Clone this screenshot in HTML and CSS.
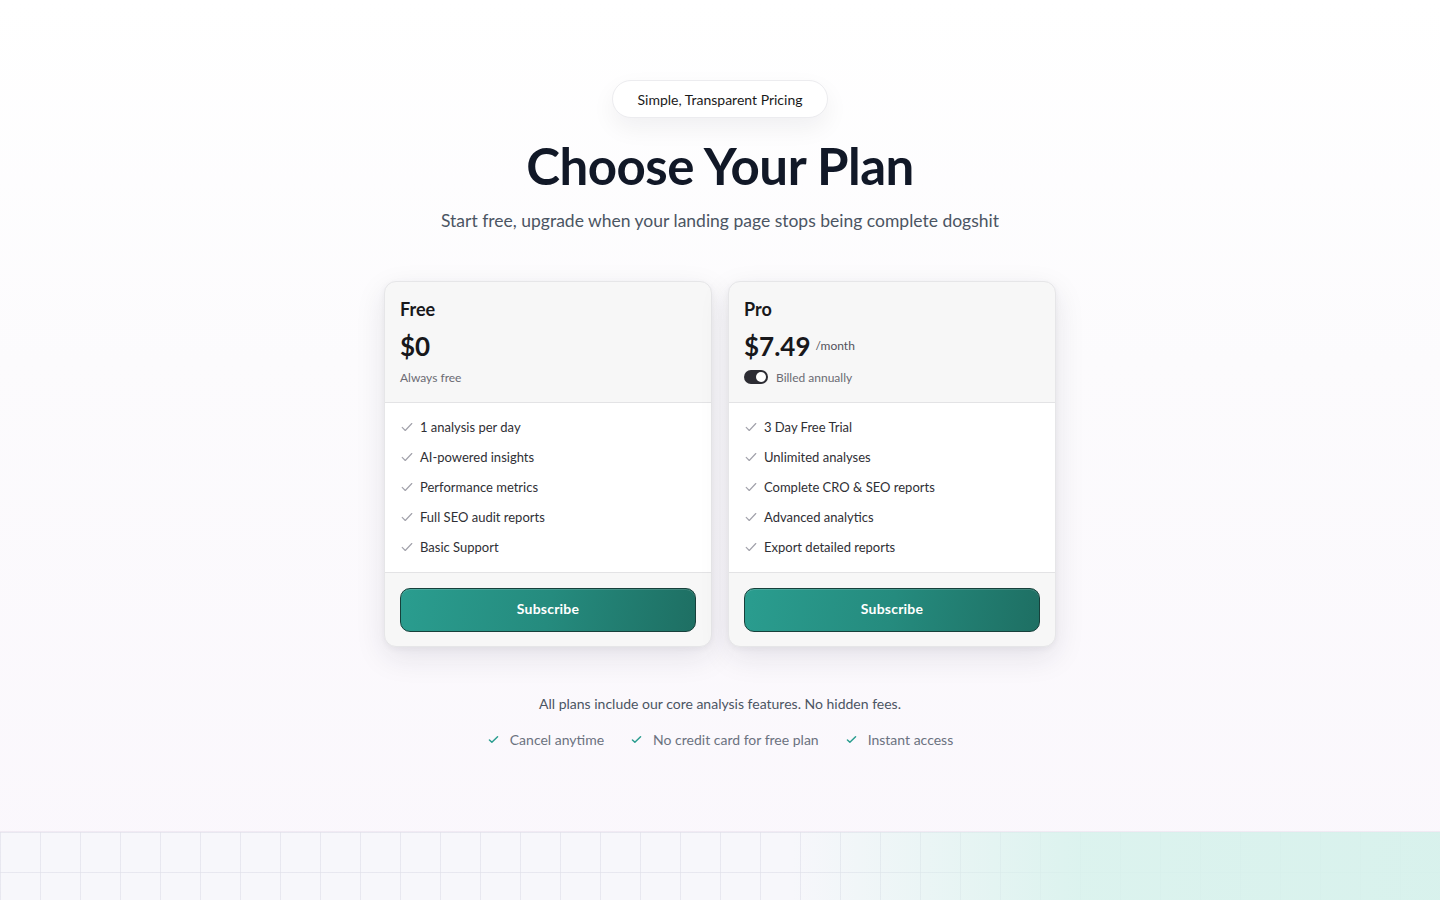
FILE: index.html
```html
<!DOCTYPE html>
<html lang="en">
<head>
<meta charset="utf-8">
<title>Choose Your Plan</title>
<link rel="stylesheet" href="styles.css">
</head>
<body>
<main class="pricing">
  <div class="badge">Simple, Transparent Pricing</div>
  <h1 class="title">Choose Your Plan</h1>
  <p class="subtitle">Start free, upgrade when your landing page stops being complete dogshit</p>

  <div class="cards">
    <section class="card">
      <div class="card-head">
        <h2 class="plan-name">Free</h2>
        <div class="price-row"><span class="price">$0</span></div>
        <div class="note-row"><span class="note">Always free</span></div>
      </div>
      <ul class="features">
        <li><svg class="chk" viewBox="0 0 16 16"><path d="M2.5 8.5l3.5 3.5 7.5-8"/></svg>1 analysis per day</li>
        <li><svg class="chk" viewBox="0 0 16 16"><path d="M2.5 8.5l3.5 3.5 7.5-8"/></svg>AI-powered insights</li>
        <li><svg class="chk" viewBox="0 0 16 16"><path d="M2.5 8.5l3.5 3.5 7.5-8"/></svg>Performance metrics</li>
        <li><svg class="chk" viewBox="0 0 16 16"><path d="M2.5 8.5l3.5 3.5 7.5-8"/></svg>Full SEO audit reports</li>
        <li><svg class="chk" viewBox="0 0 16 16"><path d="M2.5 8.5l3.5 3.5 7.5-8"/></svg>Basic Support</li>
      </ul>
      <div class="card-foot"><button class="btn">Subscribe</button></div>
    </section>

    <section class="card">
      <div class="card-head">
        <h2 class="plan-name">Pro</h2>
        <div class="price-row"><span class="price">$7.49</span><span class="per">/month</span></div>
        <div class="note-row"><span class="toggle"><span class="knob"></span></span><span class="note">Billed annually</span></div>
      </div>
      <ul class="features">
        <li><svg class="chk" viewBox="0 0 16 16"><path d="M2.5 8.5l3.5 3.5 7.5-8"/></svg>3 Day Free Trial</li>
        <li><svg class="chk" viewBox="0 0 16 16"><path d="M2.5 8.5l3.5 3.5 7.5-8"/></svg>Unlimited analyses</li>
        <li><svg class="chk" viewBox="0 0 16 16"><path d="M2.5 8.5l3.5 3.5 7.5-8"/></svg>Complete CRO &amp; SEO reports</li>
        <li><svg class="chk" viewBox="0 0 16 16"><path d="M2.5 8.5l3.5 3.5 7.5-8"/></svg>Advanced analytics</li>
        <li><svg class="chk" viewBox="0 0 16 16"><path d="M2.5 8.5l3.5 3.5 7.5-8"/></svg>Export detailed reports</li>
      </ul>
      <div class="card-foot"><button class="btn">Subscribe</button></div>
    </section>
  </div>

  <p class="fine">All plans include our core analysis features. No hidden fees.</p>
  <ul class="perks">
    <li><svg class="tchk" viewBox="0 0 16 16"><path d="M3 8.5l3 3 7-7"/></svg>Cancel anytime</li>
    <li><svg class="tchk" viewBox="0 0 16 16"><path d="M3 8.5l3 3 7-7"/></svg>No credit card for free plan</li>
    <li><svg class="tchk" viewBox="0 0 16 16"><path d="M3 8.5l3 3 7-7"/></svg>Instant access</li>
  </ul>
</main>
<section class="grid-band"></section>
</body>
</html>
```

FILE: styles.css
```css
* { box-sizing: border-box; }
html, body { margin: 0; padding: 0; }
body {
  font-family: Lato, "Liberation Sans", sans-serif;
  color: #111827;
  background: linear-gradient(180deg, #ffffff 0%, #fcfbfd 35%, #faf6fc 100%);
}
.pricing {
  display: flex;
  flex-direction: column;
  align-items: center;
  padding-top: 80px;
  height: 831px;
}
.badge {
  height: 38px;
  padding: 0 24px;
  display: flex;
  align-items: center;
  border: 1px solid #ececef;
  border-radius: 19px;
  background: #fff;
  font-size: 14px;
  color: #1a1a1a;
  box-shadow: 0 10px 24px rgba(20, 20, 40, 0.06);
}
.title {
  margin: 20px 0 0;
  font-size: 51px;
  line-height: 56px;
  font-weight: 700;
  color: #111827;
  letter-spacing: -0.5px;
}
.subtitle {
  margin: 15px 0 0;
  font-size: 17.5px;
  line-height: 24px;
  font-weight: 400;
  color: #4b5563;
}
.cards {
  display: flex;
  gap: 16px;
  margin-top: 48px;
}
.card {
  width: 328px;
  border: 1px solid #e6e6e8;
  border-radius: 12px;
  background: #f7f7f7;
  box-shadow: 0 10px 30px rgba(30, 30, 60, 0.10), 0 2px 6px rgba(30, 30, 60, 0.05);
  overflow: hidden;
}
.card-head {
  padding: 16px 15px 16px;
  border-bottom: 1px solid #e3e3e5;
}
.plan-name {
  margin: 0;
  font-size: 18px;
  line-height: 22px;
  font-weight: 700;
  color: #18181b;
}
.price-row {
  display: flex;
  align-items: center;
  gap: 5px;
  margin-top: 10px;
}
.price {
  font-size: 26px;
  line-height: 32px;
  font-weight: 700;
  color: #18181b;
}
.per {
  font-size: 12px;
  line-height: 16px;
  color: #52525b;
}
.note-row {
  display: flex;
  align-items: center;
  gap: 8px;
  margin-top: 6px;
  height: 18px;
}
.note {
  font-size: 12px;
  color: #6b6b73;
}
.toggle {
  width: 24px;
  height: 14px;
  border-radius: 7px;
  background: #2c2c33;
  display: flex;
  align-items: center;
  justify-content: flex-end;
  padding: 2px;
}
.knob {
  width: 10px;
  height: 10px;
  border-radius: 50%;
  background: #fff;
}
.features {
  list-style: none;
  margin: 0;
  padding: 9px 15px 10px;
  background: #fff;
  border-bottom: 1px solid #e3e3e5;
}
.features li {
  display: flex;
  align-items: center;
  gap: 6px;
  height: 30px;
  font-size: 13px;
  color: #2f2f35;
}
.chk {
  width: 14px;
  height: 14px;
  fill: none;
  stroke: #a1a1aa;
  stroke-width: 1.3;
  stroke-linecap: round;
  stroke-linejoin: round;
}
.card-foot {
  padding: 15px 15px 14px;
}
.btn {
  width: 100%;
  height: 44px;
  padding: 0 0 3px;
  border: 1px solid #17403b;
  border-radius: 10px;
  background: linear-gradient(100deg, #2a9d8f 0%, #258b7e 50%, #1e6f63 100%);
  color: #fff;
  font-family: Lato, "Liberation Sans", sans-serif;
  font-size: 14px;
  font-weight: 700;
  letter-spacing: 0.2px;
  box-shadow: inset 0 1px 0 rgba(255,255,255,0.15);
}
.fine {
  margin: 48px 0 0;
  font-size: 14px;
  line-height: 18px;
  color: #4b5563;
}
.perks {
  list-style: none;
  margin: 18px 0 0;
  padding: 0;
  display: flex;
  gap: 26px;
}
.perks li {
  display: flex;
  align-items: center;
  gap: 10px;
  font-size: 14px;
  color: #6b7280;
}
.tchk {
  width: 13px;
  height: 13px;
  fill: none;
  stroke: #2a9d8f;
  stroke-width: 1.8;
  stroke-linecap: round;
  stroke-linejoin: round;
}
.grid-band {
  height: 200px;
  border-top: 1px solid #f1eaf3;
  background-color: #f7f7fb;
  background-image:
    linear-gradient(90deg, rgba(247,247,251,0) 0%, rgba(247,247,251,0) 55%, rgba(215,242,236,0.85) 75%, rgba(213,241,235,0.9) 100%),
    linear-gradient(90deg, rgba(225,225,235,0.7) 1px, transparent 1px),
    linear-gradient(180deg, rgba(225,225,235,0.7) 1px, transparent 1px);
  background-size: 100% 100%, 40px 40px, 40px 40px;
}
```
